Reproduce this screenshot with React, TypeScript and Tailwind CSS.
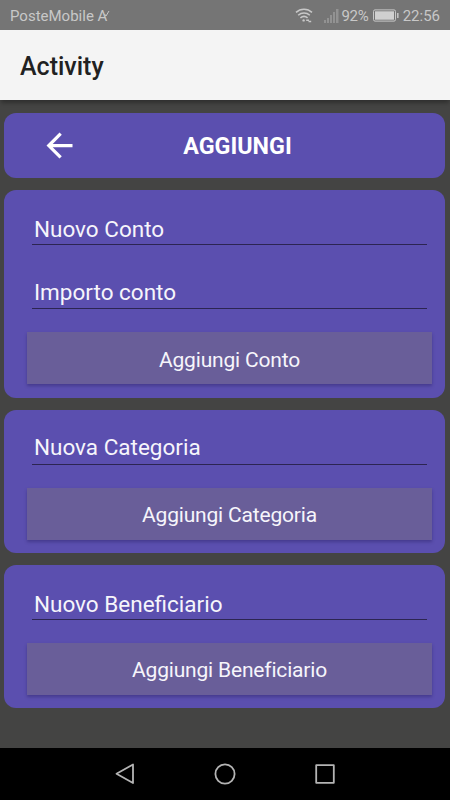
import type { ReactNode } from "react";
import clsx from "clsx";

function StatusBar() {
  return (
    <div className="flex h-[30px] items-center justify-between bg-[#757575] px-[10px] text-[15px] leading-[30px] text-[#c8c8c8]">
      <div className="flex items-center pt-px">
        <span className="whitespace-nowrap">PosteMobile A</span>
        <svg width="6" height="7" viewBox="0 0 6 7" className="-ml-[3px] mb-[5px]" fill="none" stroke="#c8c8c8">
          <path d="M0.5 4L2 6L5 1" />
        </svg>
      </div>
      <div className="flex items-center pt-px">
        <svg width="18" height="15" viewBox="0 0 18 15" fill="none" stroke="#c8c8c8" strokeWidth="1.5">
          <path d="M1 4.4C5.5 0.2 12.5 0.2 17 4.4" />
          <path d="M3.2 7.2C6.5 4.2 11.5 4.2 14.8 7.2" />
          <path d="M5.4 9.9C7.5 8.1 10.5 8.1 12.6 9.9" />
          <circle cx="8.6" cy="12.4" r="1.2" fill="#c8c8c8" stroke="none" />
          <path d="M11.2 12.3H14M13.5 13.4H16.2" />
        </svg>
        <svg width="15" height="14" viewBox="0 0 15 14" className="ml-[11px]" fill="#929292">
          <rect x="0" y="11" width="2" height="3" />
          <rect x="3" y="9" width="2" height="5" />
          <rect x="6" y="6" width="2" height="8" />
          <rect x="9" y="3" width="2" height="11" />
          <rect x="12" y="0" width="2.5" height="14" />
        </svg>
        <span className="ml-[2px] tracking-[-0.2px]">92%</span>
        <svg width="26" height="13" viewBox="0 0 26 13" className="ml-[4px]" fill="none" stroke="#c8c8c8">
          <rect x="0.5" y="0.9" width="22" height="11.2" rx="1.5" />
          <rect x="2" y="2.3" width="19" height="8.4" fill="#d0d0d0" stroke="none" />
          <path d="M24.8 4V9" strokeWidth="1.5" />
        </svg>
        <span className="ml-[4px]">22:56</span>
      </div>
    </div>
  );
}

function Card({ children, className }: { children: ReactNode; className?: string }) {
  return (
    <section className={clsx("rounded-[12px] bg-[#5b4faf] pr-[13px] pl-[23px]", className)}>
      {children}
    </section>
  );
}

function Field({ label, className }: { label: string; className?: string }) {
  return (
    <div
      className={clsx(
        "mx-[5px] h-[29px] border-b border-[#2c2551] pl-[2px] text-[22.5px] text-[#f6f5fb]",
        className ?? "leading-[26px]",
      )}
    >
      {label}
    </div>
  );
}

function AddButton({ label, className }: { label: string; className?: string }) {
  return (
    <button
      className={clsx(
        "block h-[52px] w-full bg-[#695e99] text-center text-[21px] tracking-[-0.18px] text-[#f6f5fb] shadow-[0_2px_3px_rgba(30,20,80,0.35)]",
        className ?? "pt-[4px]",
      )}
    >
      {label}
    </button>
  );
}

export default function App() {
  return (
    <div className="flex h-[800px] w-[450px] flex-col overflow-hidden bg-[#444443] font-[Roboto,sans-serif]">
      <StatusBar />
      <header className="flex h-[70px] shrink-0 items-center bg-[#f4f4f4] pt-[3px] pl-[20px] text-[25px] font-medium text-[#212121] shadow-[0_4px_4px_-1px_rgba(0,0,0,0.3)]">
        Activity
      </header>
      <main className="flex grow flex-col gap-[12px] pt-[13px] pr-[5px] pl-[4px]">
        <div className="grid h-[65px] grid-cols-[1fr_auto_1fr] items-center rounded-[12px] bg-[#5b4faf]">
          <svg width="39" height="39" viewBox="0 0 24 24" className="ml-[36px]" fill="#fff">
            <path d="M20 11H7.83l5.59-5.59L12 4l-8 8 8 8 1.41-1.41L7.83 13H20v-2z" />
          </svg>
          <h1 className="pt-[2px] pl-[26px] text-[23.3px] font-bold text-white">AGGIUNGI</h1>
        </div>
        <Card className="pt-[26px] pb-[14px]">
          <Field label="Nuovo Conto" />
          <div className="pt-[35px] pb-[23px]">
            <Field label="Importo conto" className="leading-[24px]" />
          </div>
          <AddButton label="Aggiungi Conto" className="pt-[5px]" />
        </Card>
        <Card className="pt-[26px] pb-[13px]">
          <div className="pb-[23px]">
            <Field label="Nuova Categoria" className="leading-[22px]" />
          </div>
          <AddButton label="Aggiungi Categoria" />
        </Card>
        <Card className="pt-[26px] pb-[13px]">
          <div className="pb-[23px]">
            <Field label="Nuovo Beneficiario" />
          </div>
          <AddButton label="Aggiungi Beneficiario" />
        </Card>
      </main>
      <nav className="flex h-[52px] shrink-0 items-center justify-center gap-[76px] bg-black">
        <svg width="24" height="24" viewBox="0 0 24 24" fill="none" stroke="#b4b4b4" strokeWidth="1.8" strokeLinejoin="round">
          <path d="M20 2.5V21L3.5 11.8Z" />
        </svg>
        <svg width="24" height="24" viewBox="0 0 24 24" fill="none" stroke="#b4b4b4" strokeWidth="1.8">
          <circle cx="12" cy="12" r="9.6" />
        </svg>
        <svg width="24" height="24" viewBox="0 0 24 24" fill="none" stroke="#b4b4b4" strokeWidth="1.8" strokeLinejoin="round">
          <rect x="3.2" y="3.2" width="17.6" height="17.6" />
        </svg>
      </nav>
    </div>
  );
}
